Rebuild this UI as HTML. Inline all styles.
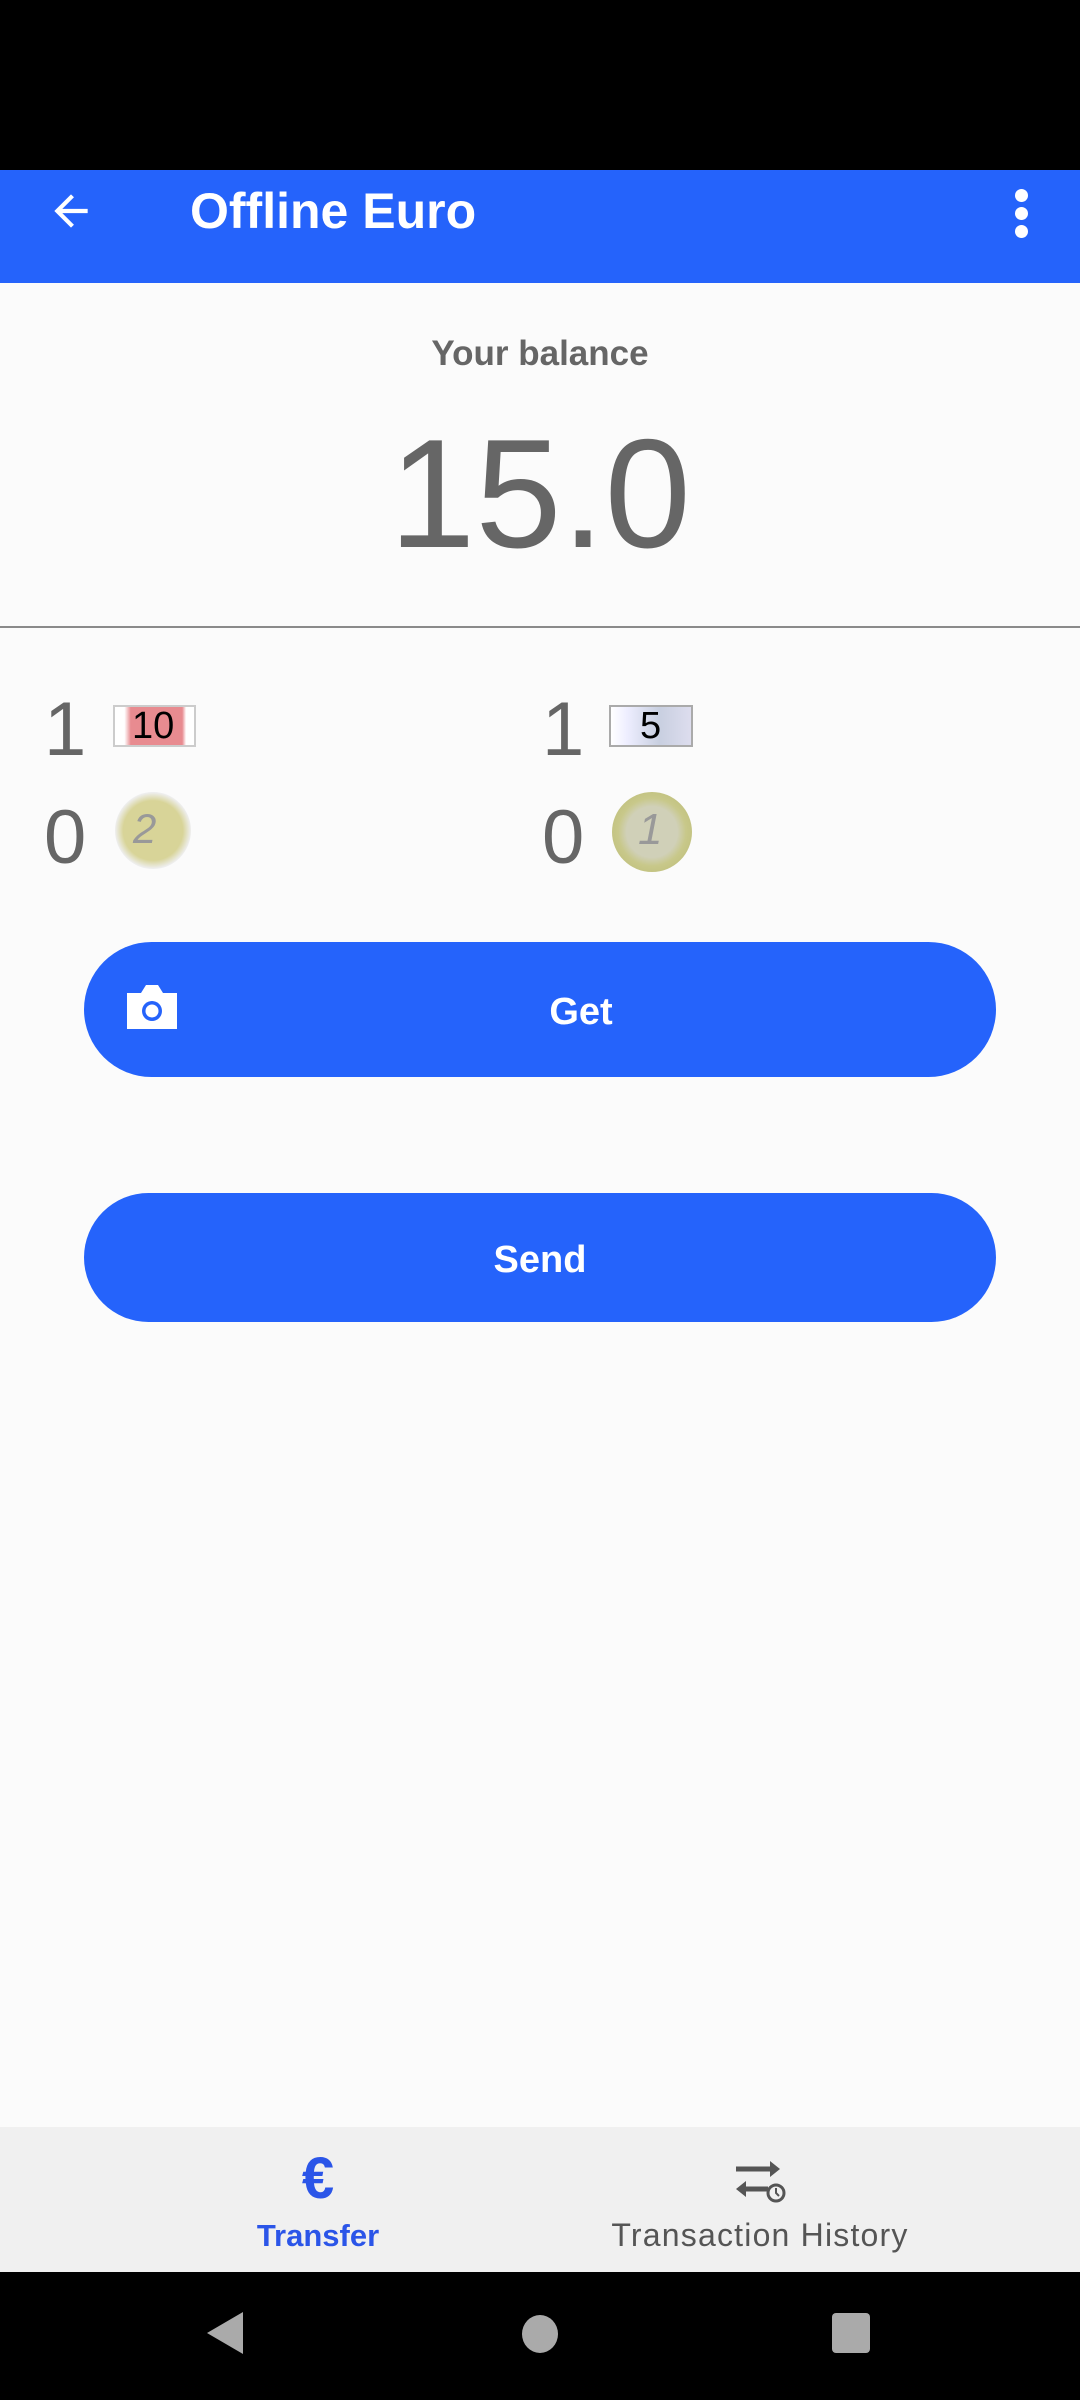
<!DOCTYPE html>
<html><head><meta charset="utf-8"><style>
*{margin:0;padding:0;box-sizing:border-box}
body{width:1080px;height:2400px;background:#fbfbfb;position:relative;overflow:hidden;font-family:"Liberation Sans",sans-serif}
.abs{position:absolute}
.blue{background:#2563fb}
.t{white-space:nowrap;line-height:1}
</style></head><body>
<div class="abs" style="left:0;top:0;width:1080px;height:170px;background:#000"></div>
<div class="abs blue" style="left:0;top:170px;width:1080px;height:113px"></div>
<svg class="abs" style="left:46px;top:186px" width="50" height="50" viewBox="0 0 24 24"><path d="M20 11H7.83l5.59-5.59L12 4l-8 8 8 8 1.41-1.41L7.83 13H20v-2z" fill="#fff"/></svg>
<div class="abs t" style="left:190px;top:186px;font-size:50px;color:#fff;font-weight:bold">Offline Euro</div>
<div class="abs" style="left:1015px;top:189px;width:13px;height:13px;border-radius:50%;background:#fff"></div>
<div class="abs" style="left:1015px;top:207px;width:13px;height:13px;border-radius:50%;background:#fff"></div>
<div class="abs" style="left:1015px;top:225px;width:13px;height:13px;border-radius:50%;background:#fff"></div>

<div class="abs t" style="left:0;width:1080px;text-align:center;top:336px;font-size:35px;font-weight:bold;color:#666">Your balance</div>
<div class="abs t" style="left:0;width:1080px;text-align:center;top:416px;font-size:155px;color:#666">15.0</div>
<div class="abs" style="left:0;top:626px;width:1080px;height:2px;background:#8a8a8a"></div>

<div class="abs t" style="left:44px;top:692px;font-size:76px;color:#666">1</div>
<div class="abs" style="left:113px;top:705px;width:83px;height:42px;background:linear-gradient(90deg,#fff 0,#fff 12%,#e88b90 20%,#e88b90 85%,#fff 90%);border:2px solid #ccc"></div>
<div class="abs t" style="left:132px;top:707px;font-size:38px;color:#000">10</div>
<div class="abs t" style="left:542px;top:692px;font-size:76px;color:#666">1</div>
<div class="abs" style="left:609px;top:705px;width:84px;height:42px;background:linear-gradient(90deg,#fff 0,#eef 20%,#c8cfe0 60%,#dde 100%);border:2px solid #aaa"></div>
<div class="abs t" style="left:640px;top:707px;font-size:38px;color:#000">5</div>

<div class="abs t" style="left:44px;top:800px;font-size:76px;color:#666">0</div>
<div class="abs" style="left:115px;top:792px;width:76px;height:77px;border-radius:50%;background:radial-gradient(circle,#d8d498 0,#d8d498 55%,#eee 70%,#ddd 100%)"></div>
<div class="abs t" style="left:133px;top:808px;font-size:42px;color:#999;font-style:italic">2</div>
<div class="abs t" style="left:542px;top:800px;font-size:76px;color:#666">0</div>
<div class="abs" style="left:612px;top:792px;width:80px;height:80px;border-radius:50%;background:radial-gradient(circle,#d0d0b8 0,#d0d0b8 45%,#c8c88a 60%,#b8b870 100%)"></div>
<div class="abs t" style="left:638px;top:808px;font-size:44px;color:#999;font-style:italic">1</div>

<div class="abs blue" style="left:84px;top:942px;width:912px;height:135px;border-radius:68px"></div>
<svg class="abs" style="left:125px;top:983px" width="54" height="48" viewBox="0 0 54 48"><path d="M2 10h14l5-8h12l5 8h14v36H2z" fill="#fff"/><circle cx="27" cy="28" r="10" fill="#2563fb"/><circle cx="27" cy="28" r="6.5" fill="#fff"/></svg>
<div class="abs t" style="left:481px;width:200px;text-align:center;top:993px;font-size:38px;color:#fff;font-weight:bold">Get</div>
<div class="abs blue" style="left:84px;top:1193px;width:912px;height:129px;border-radius:65px"></div>
<div class="abs t" style="left:440px;width:200px;text-align:center;top:1241px;font-size:38px;color:#fff;font-weight:bold">Send</div>

<div class="abs" style="left:0;top:2127px;width:1080px;height:145px;background:#f0f0f0"></div>
<div class="abs t" style="left:268px;width:100px;text-align:center;top:2150px;font-size:58px;color:#2b55e8;font-weight:bold">€</div>
<div class="abs t" style="left:218px;width:200px;text-align:center;top:2220px;font-size:31px;color:#2b55e8;font-weight:bold">Transfer</div>
<svg class="abs" style="left:732px;top:2157px" width="56" height="48" viewBox="0 0 56 48"><path d="M4 12h36" stroke="#555" stroke-width="5"/><path d="M38 4l10 8-10 8z" fill="#555"/><path d="M12 32h24" stroke="#555" stroke-width="5"/><path d="M14 24l-10 8 10 8z" fill="#555"/><circle cx="44" cy="36" r="8" fill="#f0f0f0" stroke="#555" stroke-width="3"/><path d="M44 31v5l3 3" stroke="#555" stroke-width="2" fill="none"/></svg>
<div class="abs t" style="left:560px;width:400px;text-align:center;top:2219px;font-size:32px;letter-spacing:1.2px;color:#555">Transaction History</div>

<div class="abs" style="left:0;top:2272px;width:1080px;height:128px;background:#000"></div>
<svg class="abs" style="left:205px;top:2312px" width="40" height="42"><path d="M38 0v42L2 21z" fill="#aaa"/></svg>
<div class="abs" style="left:522px;top:2315px;width:36px;height:38px;border-radius:50%;background:#aaa"></div>
<div class="abs" style="left:832px;top:2313px;width:38px;height:40px;border-radius:4px;background:#aaa"></div>
</body></html>
